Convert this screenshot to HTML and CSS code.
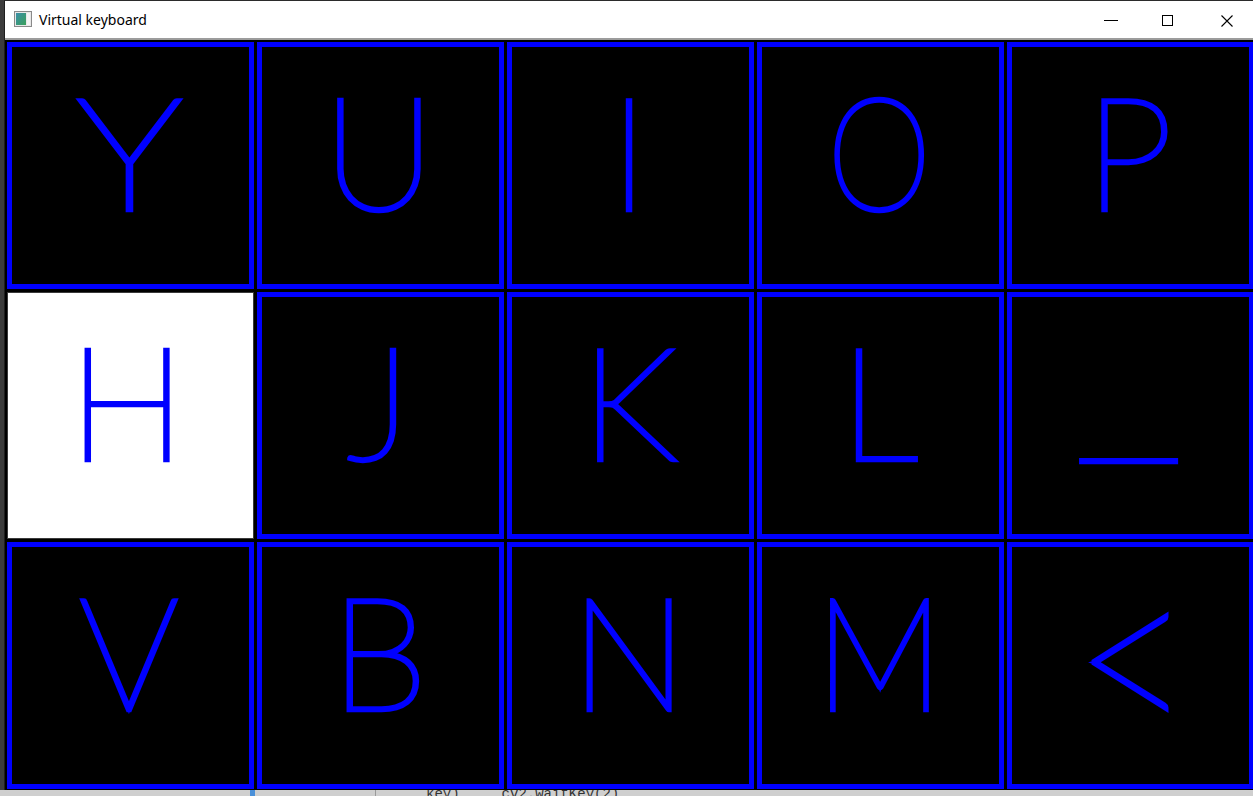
FILE: index.html
```html
<!DOCTYPE html>
<html lang="en">
<head>
<meta charset="utf-8">
<title>Virtual keyboard</title>
<link rel="stylesheet" href="styles.css">
</head>
<body>
<div class="window">
  <header class="titlebar">
    <svg class="app-icon" width="18" height="16" viewBox="0 0 18 16">
      <defs>
        <linearGradient id="ig" x1="0" y1="0" x2="1" y2="1">
          <stop offset="0" stop-color="#3b8fa8"/>
          <stop offset="1" stop-color="#3aa05a"/>
        </linearGradient>
      </defs>
      <rect x="0.5" y="0.5" width="17" height="15" fill="#e8e8e8" stroke="#8a8a8a"/>
      <rect x="2" y="2" width="10" height="12" fill="url(#ig)"/>
      <rect x="13" y="2" width="3" height="12" fill="#f4f4f4"/>
    </svg>
    <span class="title">Virtual keyboard</span>
    <div class="controls">
      <div class="btn btn-min"><span class="min-line"></span></div>
      <div class="btn btn-max"><span class="max-box"></span></div>
      <div class="btn btn-close">
        <svg width="12" height="12" viewBox="0 0 12 12"><path d="M0.5 0.5 L11.5 11.5 M11.5 0.5 L0.5 11.5" stroke="#000" stroke-width="1.1" fill="none"/></svg>
      </div>
    </div>
  </header>
  <main class="canvas">
    <div class="grid">
      <div class="cell"><div class="key"><span class="glyph glyph-y">Y</span></div></div>
      <div class="cell"><div class="key"><span class="glyph">U</span></div></div>
      <div class="cell"><div class="key"><span class="glyph">I</span></div></div>
      <div class="cell"><div class="key"><span class="glyph glyph-o">O</span></div></div>
      <div class="cell"><div class="key"><span class="glyph">P</span></div></div>
      <div class="cell"><div class="key key-active"><span class="glyph">H</span></div></div>
      <div class="cell"><div class="key"><span class="glyph">J</span></div></div>
      <div class="cell"><div class="key"><span class="glyph">K</span></div></div>
      <div class="cell"><div class="key"><span class="glyph">L</span></div></div>
      <div class="cell"><div class="key"><span class="glyph glyph-under">_</span></div></div>
      <div class="cell"><div class="key"><span class="glyph">V</span></div></div>
      <div class="cell"><div class="key"><span class="glyph">B</span></div></div>
      <div class="cell"><div class="key"><span class="glyph">N</span></div></div>
      <div class="cell"><div class="key"><span class="glyph glyph-m">M</span></div></div>
      <div class="cell"><div class="key"><span class="glyph glyph-lt">&lt;</span></div></div>
    </div>
  </main>
</div>
<div class="under">
  <span class="under-mark"></span>
  <span class="under-divider"></span>
  <span class="under-code">key)&nbsp;&nbsp;&nbsp;&nbsp;&nbsp;cv2.waitKey(2)</span>
</div>
</body>
</html>
```
FILE: styles.css
```css
* { box-sizing: border-box; }
html, body {
  margin: 0;
  padding: 0;
  width: 1253px;
  height: 796px;
  overflow: hidden;
  background: #3c3c3c;
}
body {
  font-family: "Noto Sans", "Liberation Sans", sans-serif;
}
.window {
  margin-left: 4px;
  width: 1249px;
  border-top: 1px solid #2b2b2b;
  border-left: 1px solid #1e1e1e;
  background: #000;
}
.titlebar {
  height: 39px;
  background: #fff;
  border-bottom: 2px solid #9c9c9c;
  display: flex;
  align-items: center;
}
.app-icon {
  margin-left: 9px;
  margin-top: -1px;
  flex: none;
}
.title {
  margin-left: 7px;
  font-size: 14px;
  color: #000;
  margin-top: -1px;
}
.controls {
  margin-left: auto;
  display: flex;
  height: 100%;
}
.btn {
  height: 100%;
  display: flex;
  align-items: center;
  justify-content: center;
}
.btn-min { width: 44px; }
.btn-max { width: 68px; }
.btn-close { width: 52px; }
.min-line {
  display: block;
  width: 14px;
  height: 1px;
  background: #000;
  margin-top: 1px;
}
.max-box {
  display: block;
  width: 11px;
  height: 11px;
  border: 1px solid #000;
  margin-top: 1px;
}
.btn-close svg { display: block; margin-top: 2px; }
.canvas {
  width: 1248px;
  height: 750px;
  overflow: hidden;
  background: #000;
}
.grid {
  width: 1250px;
  display: grid;
  grid-template-columns: repeat(5, 250px);
  grid-template-rows: repeat(3, 250px);
}
.cell {
  padding: 2px 1px 1px 2px;
}
.key {
  width: 247px;
  height: 247px;
  border: 5px solid #0000ff;
  background: #000;
  text-align: center;
  padding-top: 25px;
  padding-right: 3px;
}
.key-active {
  background: #fff;
  border: 1px solid #3a3a3a;
  padding-top: 29px;
  padding-right: 7px;
  margin: 0;
}
.glyph {
  display: inline-block;
  font-family: "Lato", sans-serif;
  font-weight: 100;
  font-size: 156px;
  line-height: 1;
  color: #0000ff;
  -webkit-text-stroke: 4.6px #0000ff;
}
.glyph-y {
  transform: scaleX(1.18);
}
.glyph-o {
  transform: scaleX(0.85);
}
.glyph-m {
  transform: scaleX(0.92);
}
.glyph-under {
  transform: translateY(-19px) scaleX(1.5);
}
.glyph-lt {
  font-size: 200px;
  line-height: 0.8;
  -webkit-text-stroke: 4px #0000ff;
  transform: translate(4px, -2px) scaleY(1.23);
}
.under {
  height: 6px;
  background: #cfcfcf;
  display: flex;
  align-items: flex-start;
  overflow: hidden;
}
.under-mark {
  width: 5px;
  height: 6px;
  margin-left: 250px;
  background: #4a90d9;
}
.under-divider {
  width: 1px;
  height: 6px;
  margin-left: 120px;
  background: #9a9a9a;
}
.under-code {
  margin-left: 50px;
  font-family: "Liberation Mono", monospace;
  font-size: 14px;
  line-height: 14px;
  margin-top: -3px;
  color: #333;
}
```
